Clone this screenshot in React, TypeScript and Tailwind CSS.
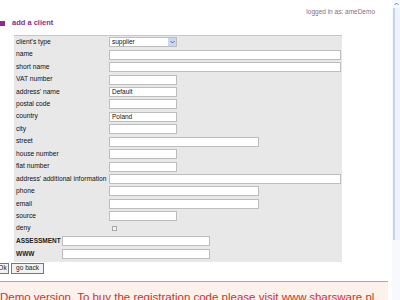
import React from 'react';

type Row = { label: string; kind: 'select' | 'text' | 'check'; w?: 'short' | 'mid' | 'full'; value?: string };

const ROWS: Row[] = [
  { label: "client's type", kind: 'select', value: 'supplier' },
  { label: 'name', kind: 'text', w: 'full' },
  { label: 'short name', kind: 'text', w: 'full' },
  { label: 'VAT number', kind: 'text', w: 'short' },
  { label: "address' name", kind: 'text', w: 'short', value: 'Default' },
  { label: 'postal code', kind: 'text', w: 'short' },
  { label: 'country', kind: 'text', w: 'short', value: 'Poland' },
  { label: 'city', kind: 'text', w: 'short' },
  { label: 'street', kind: 'text', w: 'mid' },
  { label: 'house number', kind: 'text', w: 'short' },
  { label: 'flat number', kind: 'text', w: 'short' },
  { label: "address' additional information", kind: 'text', w: 'full' },
  { label: 'phone', kind: 'text', w: 'mid' },
  { label: 'email', kind: 'text', w: 'mid' },
  { label: 'source', kind: 'text', w: 'short' },
  { label: 'deny', kind: 'check' },
];

const WIDTHS = { short: 'w-[68px]', mid: 'w-[150px]', full: 'w-[232px]' };

function Field({ row }: { row: Row }) {
  if (row.kind === 'select') {
    return (
      <div className="flex h-[10px] w-[68px] items-center border border-[#bdbdbd] bg-white">
        <span className="flex-1 pl-[2px] text-[6.5px] leading-none text-[#111]">{row.value}</span>
        <span className="flex h-full w-[8px] items-center justify-center bg-[#c9d7f2]">
          <svg width="5" height="4" viewBox="0 0 5 4"><path d="M0.5 1 L2.5 3 L4.5 1" stroke="#4d6aa8" strokeWidth="1" fill="none" /></svg>
        </span>
      </div>
    );
  }
  if (row.kind === 'check') {
    return <div className="ml-[3px] h-[5px] w-[5px] border border-[#a8a8a8] bg-[#f4f4f4]" />;
  }
  return (
    <div className={`flex h-[10px] items-center border border-[#bdbdbd] bg-white pl-[2px] text-[6.5px] leading-none text-[#111] ${WIDTHS[row.w ?? 'short']}`}>
      {row.value}
    </div>
  );
}

export default function App() {
  return (
    <div className="flex h-[300px] w-[400px] overflow-hidden bg-white" style={{ fontFamily: '"Liberation Sans", Arial, sans-serif' }}>
      <div className="flex w-[392px] flex-col overflow-hidden">
        <div className="flex h-[17px] shrink-0 justify-end pr-[17px] pt-[9px]">
          <span className="text-[6.5px] leading-none text-[#8a6a8a]">logged in as: ameDemo</span>
        </div>

        <div className="flex h-[12px] shrink-0 items-center gap-[7px]">
          <span className="h-[5px] w-[5px] bg-[#8e2a8e]" />
          <span className="text-[7.5px] font-bold leading-none text-[#8e2a8e]">add a client</span>
        </div>

        <div className="ml-[14px] mt-[6px] w-[328px] shrink-0 border-t border-[#c6c6c6] bg-[#e8e8e8] pb-[2px]">
          {ROWS.map(r => (
            <div key={r.label} className="flex h-[12.45px] items-center">
              <span className="w-[95px] pl-[2px] text-[6.7px] leading-none text-[#111]">{r.label}</span>
              <Field row={r} />
            </div>
          ))}
          <div className="flex flex-col">
            {['ASSESSMENT', 'WWW'].map(l => (
              <div key={l} className="flex h-[12.5px] items-center">
                <span className="w-[48px] pl-[2px] text-[6.5px] font-bold leading-none text-[#222]">{l}</span>
                <div className="h-[10px] w-[148px] border border-[#bdbdbd] bg-white" />
              </div>
            ))}
          </div>
        </div>

        <div className="mt-[1px] flex shrink-0 gap-[2px]">
          <button className="-ml-[4px] h-[11px] w-[13px] border border-[#777] bg-[#f2f2f2] text-[6.5px] leading-none text-[#222]">Ok</button>
          <button className="h-[11px] w-[33px] border border-[#777] bg-[#f2f2f2] text-[6.5px] leading-none text-[#222]">go back</button>
        </div>

        <div className="mt-[7px] h-[1px] w-[388px] shrink-0 bg-[#a9a9a9]" />
        <div className="w-[388px] flex-1 overflow-hidden bg-[#fdf1ec] pt-[9px]">
          <p className="whitespace-nowrap text-[11.5px] leading-[13px] text-[#d0302a]">
            Demo version. To buy the registration code please visit www.sharsware.pl
          </p>
        </div>
      </div>

      <div className="flex w-[8px] flex-col bg-[#f7f9fd]">
        <div className="flex h-[8px] items-center justify-center">
          <svg width="5" height="4" viewBox="0 0 5 4"><path d="M0.5 3 L2.5 1 L4.5 3" stroke="#6a82b8" strokeWidth="1" fill="none" /></svg>
        </div>
        <div className="ml-[1px] h-[232px] border-l-2 border-[#c3d3f3] bg-[#eef3fd]" />
      </div>
    </div>
  );
}
